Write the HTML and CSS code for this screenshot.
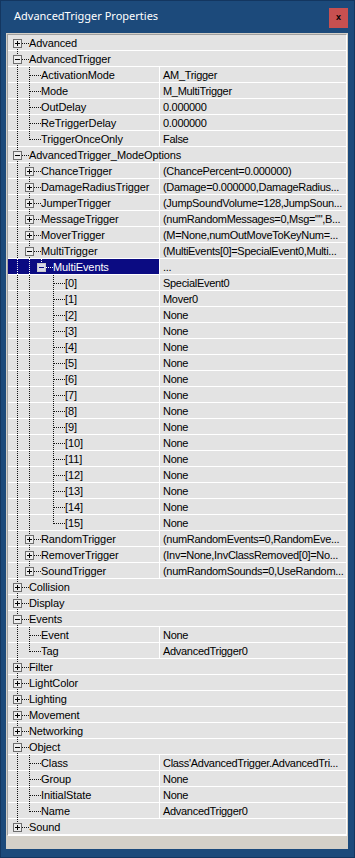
FILE: index.html
```html
<!DOCTYPE html>
<html lang="en">
<head>
    <meta charset="UTF-8">
    <meta name="viewport" content="width=device-width, initial-scale=1.0">
    <title>AdvancedTrigger Properties</title>
    <link rel="stylesheet" href="styles.css">
</head>

<body>
    <div class="win">
        <div class="titlebar">
            <span class="title">AdvancedTrigger Properties</span>
            <span class="close">x</span>
        </div>
        <div class="client">
            <div class="grid">
                <div class="row cat"><div class="name"><span class="g f"><i class="box plus"></i></span><span class="lbl">Advanced</span></div></div>
                <div class="row cat"><div class="name"><span class="g t"><i class="box minus"></i></span><span class="lbl">AdvancedTrigger</span></div></div>
                <div class="row"><div class="name"><span class="g v"></span><span class="g t"></span><span class="lbl">ActivationMode</span></div><div class="val">AM_Trigger</div></div>
                <div class="row"><div class="name"><span class="g v"></span><span class="g t"></span><span class="lbl">Mode</span></div><div class="val">M_MultiTrigger</div></div>
                <div class="row"><div class="name"><span class="g v"></span><span class="g t"></span><span class="lbl">OutDelay</span></div><div class="val">0.000000</div></div>
                <div class="row"><div class="name"><span class="g v"></span><span class="g t"></span><span class="lbl">ReTriggerDelay</span></div><div class="val">0.000000</div></div>
                <div class="row"><div class="name"><span class="g v"></span><span class="g l"></span><span class="lbl">TriggerOnceOnly</span></div><div class="val">False</div></div>
                <div class="row cat"><div class="name"><span class="g t"><i class="box minus"></i></span><span class="lbl">AdvancedTrigger_ModeOptions</span></div></div>
                <div class="row"><div class="name"><span class="g v"></span><span class="g t"><i class="box plus"></i></span><span class="lbl">ChanceTrigger</span></div><div class="val">(ChancePercent=0.000000)</div></div>
                <div class="row"><div class="name"><span class="g v"></span><span class="g t"><i class="box plus"></i></span><span class="lbl">DamageRadiusTrigger</span></div><div class="val">(Damage=0.000000,DamageRadius...</div></div>
                <div class="row"><div class="name"><span class="g v"></span><span class="g t"><i class="box plus"></i></span><span class="lbl">JumperTrigger</span></div><div class="val">(JumpSoundVolume=128,JumpSoun...</div></div>
                <div class="row"><div class="name"><span class="g v"></span><span class="g t"><i class="box plus"></i></span><span class="lbl">MessageTrigger</span></div><div class="val">(numRandomMessages=0,Msg="",B...</div></div>
                <div class="row"><div class="name"><span class="g v"></span><span class="g t"><i class="box plus"></i></span><span class="lbl">MoverTrigger</span></div><div class="val">(M=None,numOutMoveToKeyNum=...</div></div>
                <div class="row"><div class="name"><span class="g v"></span><span class="g t"><i class="box minus"></i></span><span class="lbl">MultiTrigger</span></div><div class="val">(MultiEvents[0]=SpecialEvent0,Multi...</div></div>
                <div class="row sel"><div class="name"><span class="g v"></span><span class="g v"></span><span class="g l"><i class="box minus"></i></span><span class="lbl">MultiEvents</span></div><div class="val">...</div></div>
                <div class="row"><div class="name"><span class="g v"></span><span class="g v"></span><span class="g"></span><span class="g t"></span><span class="lbl">[0]</span></div><div class="val">SpecialEvent0</div></div>
                <div class="row"><div class="name"><span class="g v"></span><span class="g v"></span><span class="g"></span><span class="g t"></span><span class="lbl">[1]</span></div><div class="val">Mover0</div></div>
                <div class="row"><div class="name"><span class="g v"></span><span class="g v"></span><span class="g"></span><span class="g t"></span><span class="lbl">[2]</span></div><div class="val">None</div></div>
                <div class="row"><div class="name"><span class="g v"></span><span class="g v"></span><span class="g"></span><span class="g t"></span><span class="lbl">[3]</span></div><div class="val">None</div></div>
                <div class="row"><div class="name"><span class="g v"></span><span class="g v"></span><span class="g"></span><span class="g t"></span><span class="lbl">[4]</span></div><div class="val">None</div></div>
                <div class="row"><div class="name"><span class="g v"></span><span class="g v"></span><span class="g"></span><span class="g t"></span><span class="lbl">[5]</span></div><div class="val">None</div></div>
                <div class="row"><div class="name"><span class="g v"></span><span class="g v"></span><span class="g"></span><span class="g t"></span><span class="lbl">[6]</span></div><div class="val">None</div></div>
                <div class="row"><div class="name"><span class="g v"></span><span class="g v"></span><span class="g"></span><span class="g t"></span><span class="lbl">[7]</span></div><div class="val">None</div></div>
                <div class="row"><div class="name"><span class="g v"></span><span class="g v"></span><span class="g"></span><span class="g t"></span><span class="lbl">[8]</span></div><div class="val">None</div></div>
                <div class="row"><div class="name"><span class="g v"></span><span class="g v"></span><span class="g"></span><span class="g t"></span><span class="lbl">[9]</span></div><div class="val">None</div></div>
                <div class="row"><div class="name"><span class="g v"></span><span class="g v"></span><span class="g"></span><span class="g t"></span><span class="lbl">[10]</span></div><div class="val">None</div></div>
                <div class="row"><div class="name"><span class="g v"></span><span class="g v"></span><span class="g"></span><span class="g t"></span><span class="lbl">[11]</span></div><div class="val">None</div></div>
                <div class="row"><div class="name"><span class="g v"></span><span class="g v"></span><span class="g"></span><span class="g t"></span><span class="lbl">[12]</span></div><div class="val">None</div></div>
                <div class="row"><div class="name"><span class="g v"></span><span class="g v"></span><span class="g"></span><span class="g t"></span><span class="lbl">[13]</span></div><div class="val">None</div></div>
                <div class="row"><div class="name"><span class="g v"></span><span class="g v"></span><span class="g"></span><span class="g t"></span><span class="lbl">[14]</span></div><div class="val">None</div></div>
                <div class="row"><div class="name"><span class="g v"></span><span class="g v"></span><span class="g"></span><span class="g l"></span><span class="lbl">[15]</span></div><div class="val">None</div></div>
                <div class="row"><div class="name"><span class="g v"></span><span class="g t"><i class="box plus"></i></span><span class="lbl">RandomTrigger</span></div><div class="val">(numRandomEvents=0,RandomEve...</div></div>
                <div class="row"><div class="name"><span class="g v"></span><span class="g t"><i class="box plus"></i></span><span class="lbl">RemoverTrigger</span></div><div class="val">(Inv=None,InvClassRemoved[0]=No...</div></div>
                <div class="row"><div class="name"><span class="g v"></span><span class="g l"><i class="box plus"></i></span><span class="lbl">SoundTrigger</span></div><div class="val">(numRandomSounds=0,UseRandom...</div></div>
                <div class="row cat"><div class="name"><span class="g t"><i class="box plus"></i></span><span class="lbl">Collision</span></div></div>
                <div class="row cat"><div class="name"><span class="g t"><i class="box plus"></i></span><span class="lbl">Display</span></div></div>
                <div class="row cat"><div class="name"><span class="g t"><i class="box minus"></i></span><span class="lbl">Events</span></div></div>
                <div class="row"><div class="name"><span class="g v"></span><span class="g t"></span><span class="lbl">Event</span></div><div class="val">None</div></div>
                <div class="row"><div class="name"><span class="g v"></span><span class="g l"></span><span class="lbl">Tag</span></div><div class="val">AdvancedTrigger0</div></div>
                <div class="row cat"><div class="name"><span class="g t"><i class="box plus"></i></span><span class="lbl">Filter</span></div></div>
                <div class="row cat"><div class="name"><span class="g t"><i class="box plus"></i></span><span class="lbl">LightColor</span></div></div>
                <div class="row cat"><div class="name"><span class="g t"><i class="box plus"></i></span><span class="lbl">Lighting</span></div></div>
                <div class="row cat"><div class="name"><span class="g t"><i class="box plus"></i></span><span class="lbl">Movement</span></div></div>
                <div class="row cat"><div class="name"><span class="g t"><i class="box plus"></i></span><span class="lbl">Networking</span></div></div>
                <div class="row cat"><div class="name"><span class="g t"><i class="box minus"></i></span><span class="lbl">Object</span></div></div>
                <div class="row"><div class="name"><span class="g v"></span><span class="g t"></span><span class="lbl">Class</span></div><div class="val">Class'AdvancedTrigger.AdvancedTri...</div></div>
                <div class="row"><div class="name"><span class="g v"></span><span class="g t"></span><span class="lbl">Group</span></div><div class="val">None</div></div>
                <div class="row"><div class="name"><span class="g v"></span><span class="g t"></span><span class="lbl">InitialState</span></div><div class="val">None</div></div>
                <div class="row"><div class="name"><span class="g v"></span><span class="g l"></span><span class="lbl">Name</span></div><div class="val">AdvancedTrigger0</div></div>
                <div class="row cat"><div class="name"><span class="g l"><i class="box plus"></i></span><span class="lbl">Sound</span></div></div>
            </div>
        </div>
    </div>
</body>
</html>
```

FILE: styles.css
```css
body {
    margin: 0;
    background-color: #1c4a7b;
}
.win {
    width: 355px;
    height: 858px;
    box-sizing: border-box;
    border: 1px solid #133660;
    background-color: #1c4a7b;
    padding: 0 6px 8px 5px;
}
.titlebar {
    height: 32px;
    display: flex;
    align-items: flex-start;
    justify-content: space-between;
    padding-left: 8px;
}
.title {
    margin-top: 7px;
    font-family: "Noto Sans", sans-serif;
    font-size: 11px;
    line-height: 16px;
    color: #ffffff;
}
.close {
    margin-top: 7px;
    width: 19px;
    height: 20px;
    background-color: #c75050;
    color: #000000;
    font-family: "Liberation Sans", Arial, sans-serif;
    font-weight: bold;
    font-size: 9px;
    line-height: 19px;
    text-align: center;
}
.client {
    height: 816px;
    box-sizing: border-box;
    background-color: #d4d0c8;
    padding: 1px 1px 13px;
}
.grid {
    height: 802px;
    box-sizing: border-box;
    border: 1px solid;
    border-color: #a0a0a0 #ffffff #ffffff #a0a0a0;
    background: repeating-linear-gradient(to bottom, #e3e3e3 0 15px, #ffffff 15px 16px);
    font-family: "Liberation Sans", Arial, sans-serif;
    font-size: 11px;
    line-height: 16px;
    color: #000000;
}
.row {
    display: flex;
    height: 16px;
}
.name {
    width: 151px;
    flex: none;
    display: flex;
    box-sizing: border-box;
    padding-left: 3px;
    white-space: nowrap;
    overflow: hidden;
    letter-spacing: -0.1px;
}
.cat .name {
    width: auto;
    flex: 1;
}
.val {
    flex: 1;
    min-width: 0;
    border-left: 1px solid #ffffff;
    padding-left: 3px;
    white-space: nowrap;
    overflow: hidden;
    letter-spacing: -0.3px;
}

/* tree guide slots */
.g {
    flex: none;
    width: 12px;
    height: 16px;
}
.v {
    background: repeating-linear-gradient(to bottom, #111 0 1px, transparent 1px 2px) 6px 0 / 1px 16px no-repeat;
}
.t, .l, .f {
    width: 18px;
    background:
        repeating-linear-gradient(to right, #111 0 1px, transparent 1px 2px) 7px 8px / 11px 1px no-repeat,
        repeating-linear-gradient(to bottom, #111 0 1px, transparent 1px 2px) 6px 0 / 1px 16px no-repeat;
}
.l {
    background-size: 11px 1px, 1px 9px;
}
.f {
    background-position: 7px 8px, 6px 8px;
    background-size: 11px 1px, 1px 8px;
}
.box {
    display: block;
    width: 9px;
    height: 9px;
    box-sizing: border-box;
    margin: 4px 0 0 2px;
    border: 1px solid #6e6e6e;
    background: linear-gradient(#000, #000) 1px 3px / 5px 1px no-repeat, #ececec;
}
.plus {
    background:
        linear-gradient(#000, #000) 1px 3px / 5px 1px no-repeat,
        linear-gradient(#000, #000) 3px 1px / 1px 5px no-repeat,
        #ececec;
}

/* selected row */
.sel .name {
    background: linear-gradient(#0b0b82, #0b0b82) 0 0 / 100% 15px no-repeat;
    color: #ffffff;
}
.sel .v {
    background-image: repeating-linear-gradient(to bottom, #ffffff 0 1px, transparent 1px 2px);
}
.sel .l {
    background-image:
        repeating-linear-gradient(to right, #ffffff 0 1px, transparent 1px 2px),
        repeating-linear-gradient(to bottom, #ffffff 0 1px, transparent 1px 2px);
}
.sel .box {
    border-color: #c8c8c8;
    background: linear-gradient(#0b0b82, #0b0b82) 1px 3px / 5px 1px no-repeat, #d8d8e8;
}
```
